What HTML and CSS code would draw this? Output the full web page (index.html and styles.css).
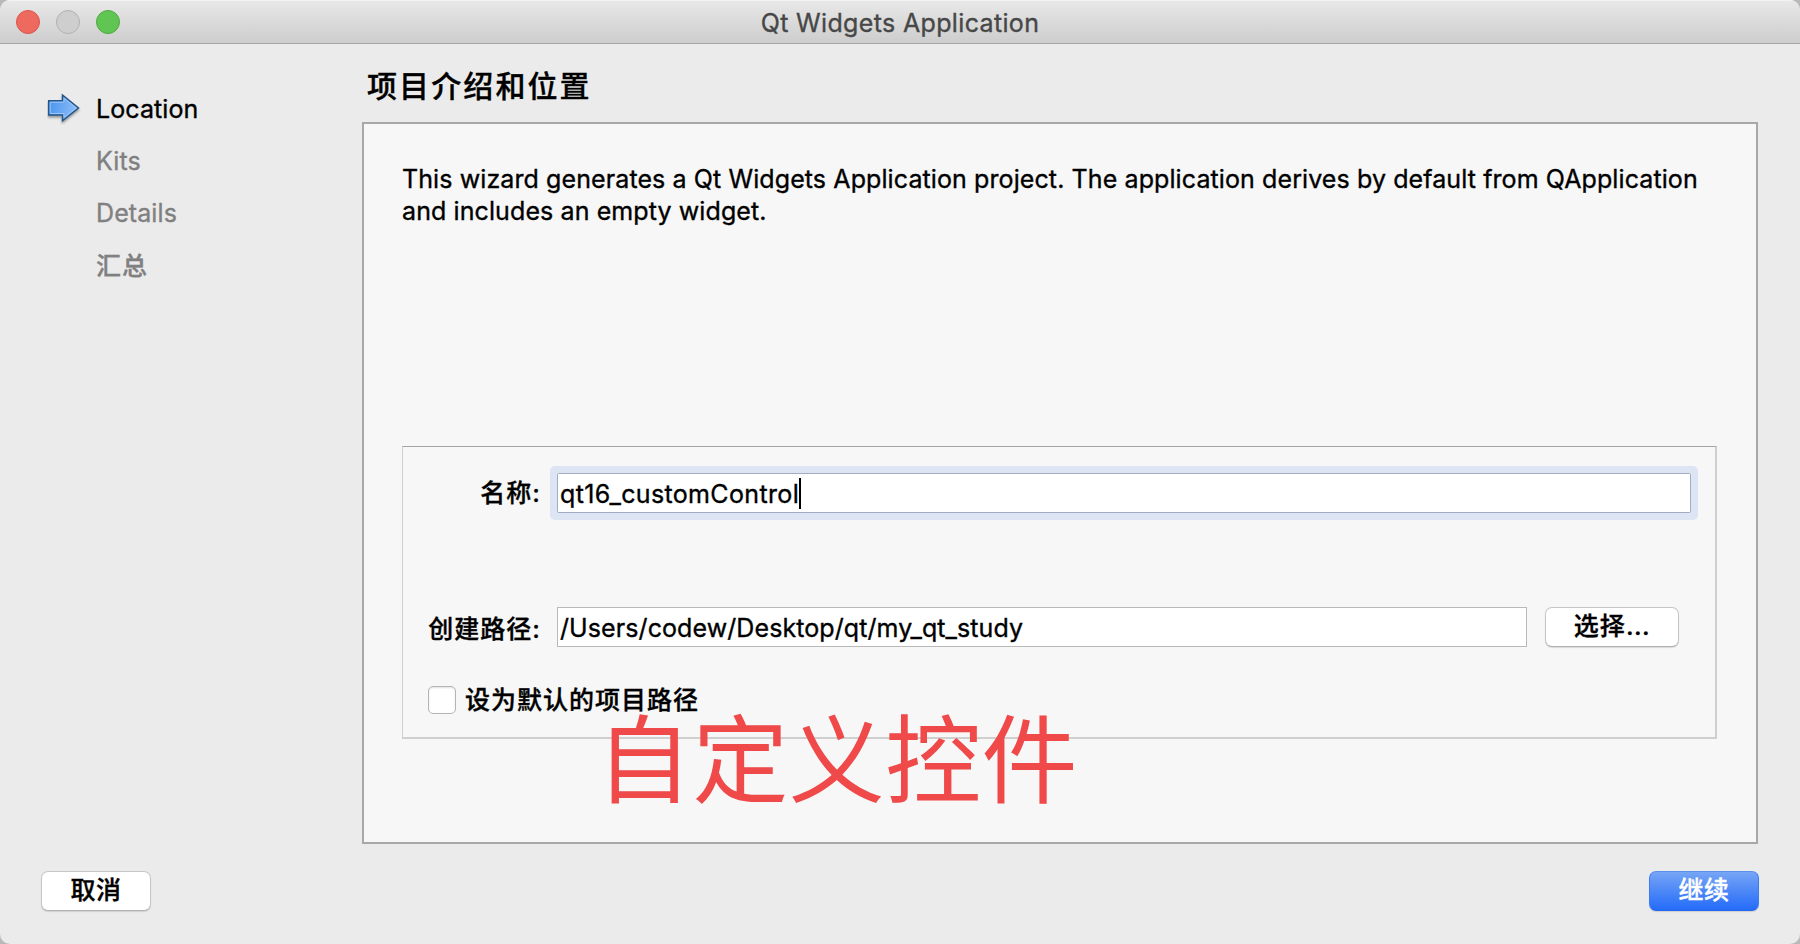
FILE: index.html
```
<!DOCTYPE html>
<html lang="zh-CN">
<head>
<meta charset="utf-8">
<title>Qt Widgets Application</title>
<link rel="stylesheet" href="styles.css">
</head>
<body>
<div class="window">
  <header class="titlebar">
    <div class="lights"><span class="light close"></span><span class="light minimize"></span><span class="light maximize"></span></div>
    <h1 class="title">Qt Widgets Application</h1>
  </header>
  <div class="body">
    <nav class="steps">
      <div class="step active">
        <svg class="arrow" viewBox="0 0 34 32" width="34" height="32">
          <defs>
            <linearGradient id="arrow-fill" x1="0" y1="0" x2="1" y2="0.2"><stop offset="0" stop-color="#4592ee"/><stop offset="1" stop-color="#8bbcf6"/></linearGradient>
            <filter id="arrow-shadow" x="-20%" y="-20%" width="140%" height="150%"><feDropShadow dx="0" dy="2" stdDeviation="1" flood-opacity=".35"/></filter>
          </defs>
          <path d="M1.7 7.7H15.5V2L31.5 15L15.5 27.8V22H1.7Z" fill="url(#arrow-fill)" stroke="#255587" stroke-width="1.5" filter="url(#arrow-shadow)"/>
          <path d="M3.2 9.2H17V5.2L29.2 15L17 24.5V20.5H3.2Z" fill="none" stroke="#9cc6f8" stroke-width="1"/>
        </svg>
        <span>Location</span>
      </div>
      <div class="step"><span>Kits</span></div>
      <div class="step"><span>Details</span></div>
      <div class="step last"><span class="cjk">汇总</span></div>
    </nav>
    <main class="main">
      <h2 class="heading">项目介绍和位置</h2>
      <section class="page">
        <p class="intro">This wizard generates a Qt Widgets Application project. The application derives by default from QApplication<br>and includes an empty widget.</p>
        <div class="group">
          <label class="label"><span class="cjk">名称</span>:</label>
          <div class="field focused"><span class="name">qt16_customControl</span><i class="caret"></i></div>
          <label class="label path-label"><span class="cjk">创建路径</span>:</label>
          <div class="path-row">
            <div class="field path">/Users/codew/Desktop/qt/my_qt_study</div>
            <button class="button choose"><span class="cjk">选择</span>...</button>
          </div>
          <label class="check"><span class="box"></span><span class="cjk">设为默认的项目路径</span></label>
        </div>
        <div class="note">自定义控件</div>
      </section>
    </main>
  </div>
  <footer class="footer">
    <button class="button">取消</button>
    <button class="button primary">继续</button>
  </footer>
</div>
</body>
</html>
```
FILE: styles.css
```
* { box-sizing: border-box; }
html { background: #b9b9b9; }
body {
  margin: 0;
  font-family: Inter, "Noto Sans CJK SC", sans-serif;
  font-size: 25px;
  letter-spacing: 0.1px;
  color: #000;
  white-space: nowrap;
  -webkit-text-stroke: 0.35px;
}
.window {
  display: flex;
  flex-direction: column;
  width: 1800px;
  height: 944px;
  background: #ebebeb;
  border-radius: 10px;
  overflow: hidden;
}
.titlebar {
  display: grid;
  grid-template-columns: 200px 1fr 200px;
  align-items: center;
  height: 44px;
  background: linear-gradient(#e8e8e8, #cdcdcd);
  border-top: 1px solid #f3f3f3;
  border-bottom: 1px solid #a6a6a6;
}
.lights { display: flex; gap: 16px; padding-left: 16px; }
.light { width: 24px; height: 24px; border-radius: 50%; border: 1px solid; }
.close { background: #ee6a5e; border-color: #d9564b; }
.minimize { background: #cecece; border-color: #b1b1b1; }
.maximize { background: #61c554; border-color: #4eaa3f; }
.title { margin: 0; padding-top: 2px; text-align: center; font-size: 25px; font-weight: 400; line-height: 32px; letter-spacing: 0.35px; color: #474747; }
.body { display: flex; height: 800px; }
.steps { width: 362px; padding: 39px 0 0 47px; }
.step { display: flex; align-items: center; height: 52px; padding-left: 49px; color: #808080; }
.active { padding-left: 0; color: #000; }
.last { height: 50px; }
.arrow { flex: none; width: 34px; margin-right: 15px; }
.cjk { font-weight: 500; letter-spacing: 1px; }
.main { width: 1396px; }
.heading { margin: 0; padding: 20px 0 0 5px; height: 78px; font-size: 30px; line-height: 44px; font-weight: 500; letter-spacing: 2.1px; }
.page { height: 722px; padding: 39px 38px 0; border: 2px solid #a8a8a8; background: #f7f7f7; }
.intro { margin: 0 0 219px; line-height: 32px; }
.group {
  display: grid;
  grid-template-columns: 137px 1134px;
  grid-template-rows: 134px 79px 28px;
  column-gap: 17px;
  align-content: start;
  width: 1315px;
  height: 293px;
  padding-top: 26px;
  border: solid #cfcfcf;
  border-width: 1px 2px 2px 1px;
  border-top-color: #a5a5a5;
}
.label { height: 40px; line-height: 41px; text-align: right; font-weight: 500; }
.path-label { line-height: 44px; }
.field { display: flex; align-items: center; height: 40px; padding: 1px 0 0 2px; background: #fff; border: 1px solid #b9b9b9; }
.focused { border-color: #a1adc3; box-shadow: 0 0 0 7px #dde4f3; border-radius: 1.5px; }
.name { letter-spacing: 0.35px; }
.caret { width: 2px; height: 31px; background: #000; }
.path-row { display: flex; gap: 18px; }
.path { width: 970px; letter-spacing: 0.09px; }
.button {
  width: 110px;
  height: 40px;
  padding: 0 0 2px;
  border: 1px solid #c6c6c6;
  border-bottom-color: #b0b0b0;
  border-radius: 7px;
  background: #fff;
  box-shadow: 0 1px 1px rgba(0, 0, 0, .12);
  font: 500 25px/32px Inter, "Noto Sans CJK SC", sans-serif;
  letter-spacing: 0.5px;
  color: #000;
}
.choose { width: 134px; }
.primary { background: linear-gradient(#76a5f5, #246bf9); border-color: #5b90ef #3f7cf3 #2468ee; color: #fff; }
.check { grid-column: 1 / 3; display: flex; align-items: center; gap: 9px; padding-left: 25px; font-weight: 500; line-height: 28px; }
.box { width: 28px; height: 28px; border: 1px solid #b5b5b5; border-radius: 5px; background: #fff; box-shadow: inset 0 1px 2px rgba(0, 0, 0, .12); }
.note { position: absolute; left: 596px; top: 690px; font-size: 96px; line-height: 140px; letter-spacing: 0.4px; color: #ef4a49; -webkit-text-stroke: 0; }
.footer { display: flex; justify-content: space-between; padding: 27px 41px 0; }
```
